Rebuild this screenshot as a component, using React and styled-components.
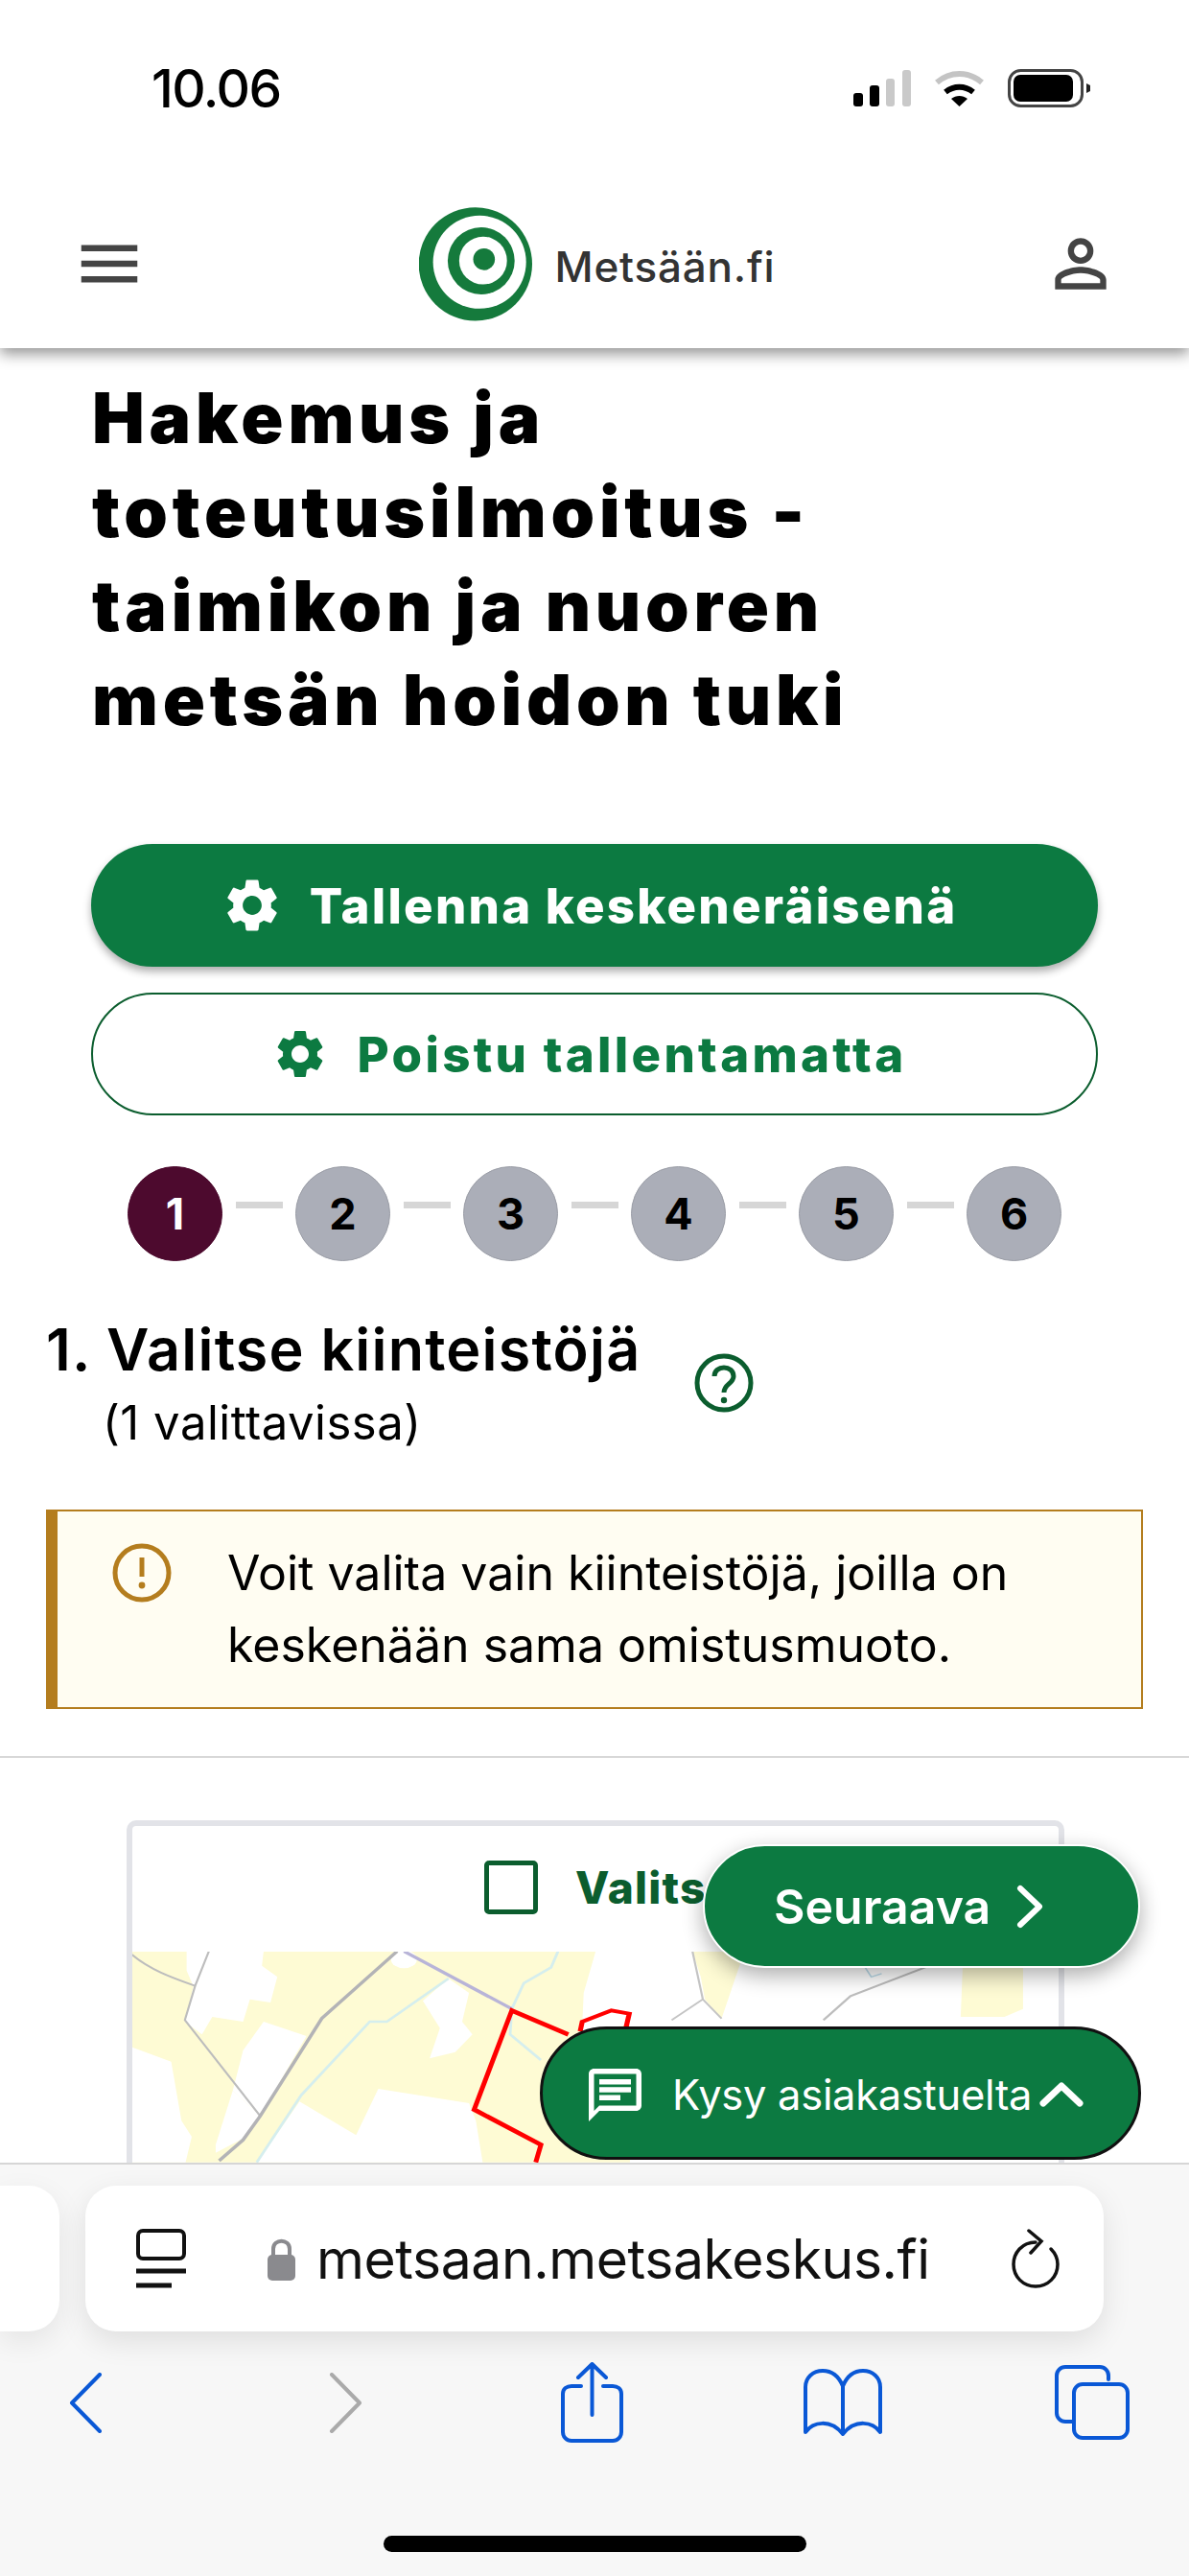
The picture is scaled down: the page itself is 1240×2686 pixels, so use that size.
import React from "react";
import styled, { createGlobalStyle } from "styled-components";
import { MdMenu, MdPersonOutline, MdSettings } from "react-icons/md";

const GREEN = "#0c7a41";
const DARK_GREEN = "#0b5d2e";
const BLUE = "#0a58d6";
const AMBER = "#b47d1e";

const GlobalStyle = createGlobalStyle`
	html, body {
		margin: 0;
		padding: 0;
		background: #fff;
	}
	body {
		font-family: Inter, "Liberation Sans", sans-serif;
		color: #000;
	}
`;

const Page = styled.div`
	position: relative;
	width: 1240px;
	height: 2686px;
	display: flex;
	flex-direction: column;
	overflow: hidden;
	background: #fff;
`;
const StatusBar = styled.div`
	height: 184px;
	display: flex;
	align-items: center;
	justify-content: space-between;
	padding: 0 103px 0 158px;
`;
const Time = styled.div`
	font-size: 55px;
	font-weight: 500;
	letter-spacing: -1.5px;
`;
const StatusIcons = styled.div`
	display: flex;
	align-items: center;
	gap: 25px;
`;
const Header = styled.header`
	position: relative;
	z-index: 2;
	height: 179px;
	padding: 3px 73px 0 75px;
	box-sizing: border-box;
	display: flex;
	align-items: center;
	justify-content: space-between;
	background: #fff;
	box-shadow: 0 6px 14px rgba(0, 0, 0, 0.42);
	clip-path: inset(0 0 -40px 0);
	color: #444;
`;
const Logo = styled.div`
	display: flex;
	align-items: center;
	gap: 24px;
	margin-left: 5px;
`;
const LogoText = styled.span`
	font-size: 44px;
	font-weight: 500;
	letter-spacing: 0.8px;
	color: #333;
	padding-top: 6px;
`;
const Main = styled.main`
	flex: 1;
	min-height: 0;
	overflow: hidden;
`;
const Title = styled.h1`
	margin: 24px 0 101px;
	padding-left: 96px;
	font-size: 73px;
	line-height: 98px;
	font-weight: 900;
	letter-spacing: 4.8px;
`;
const Actions = styled.div`
	display: flex;
	flex-direction: column;
	gap: 27px;
	padding: 0 95px;
`;
const ActionButton = styled.button`
	height: 128px;
	border-radius: 64px;
	display: flex;
	align-items: center;
	justify-content: center;
	gap: ${(p) => (p.$outlined ? 30 : 27)}px;
	padding: 0 12px 0 0;
	font-family: inherit;
	font-size: 51px;
	font-weight: 800;
	letter-spacing: ${(p) => (p.$outlined ? 3.3 : 2.2)}px;
	box-sizing: border-box;
	color: ${(p) => (p.$outlined ? GREEN : "#fff")};
	background: ${(p) => (p.$outlined ? "#fff" : GREEN)};
	border: ${(p) => (p.$outlined ? `2px solid ${DARK_GREEN}` : "none")};
	box-shadow: ${(p) => (p.$outlined ? "none" : "0 5px 9px rgba(0, 0, 0, 0.32)")};
`;
const Stepper = styled.div`
	display: flex;
	align-items: center;
	margin-top: 53px;
	padding-left: 133px;
`;
const StepCircle = styled.div`
	width: 99px;
	height: 99px;
	flex: none;
	box-sizing: border-box;
	border-radius: 50%;
	display: flex;
	align-items: center;
	justify-content: center;
	font-size: 45px;
	font-weight: 700;
	color: ${(p) => (p.$active ? "#fff" : "#000")};
	background: ${(p) => (p.$active ? "#4d0a2e" : "#abaeb8")};
	border: 1px solid ${(p) => (p.$active ? "#4d0a2e" : "#9a9da6")};
`;
const StepLine = styled.div`
	width: 49px;
	height: 7px;
	margin: 0 13px 18px 14px;
	background: #d6d6d6;
	flex: none;
`;
const SectionHead = styled.div`
	display: flex;
	align-items: center;
	margin-top: 57px;
	padding-left: 48px;
`;
const SectionText = styled.div`
	width: 676px;
`;
const SectionTitle = styled.h2`
	margin: 0;
	font-size: 61px;
	line-height: 70px;
	font-weight: 600;
	letter-spacing: 1.2px;
	white-space: nowrap;
`;
const SectionNote = styled.div`
	margin-top: 14px;
	padding-left: 59px;
	font-size: 49px;
	line-height: 56px;
	letter-spacing: 0.5px;
`;
const Alert = styled.div`
	margin: 62px 48px 0;
	height: 208px;
	box-sizing: border-box;
	display: flex;
	padding: 33px 40px 0 57px;
	gap: 58px;
	background: #fffdf2;
	border: 2px solid ${AMBER};
	border-left-width: 12px;
`;
const AlertText = styled.div`
	font-size: 50px;
	line-height: 75px;
	margin-top: -6px;
	white-space: nowrap;
`;
const Divider = styled.hr`
	margin: 49px 0 0;
	border: 0;
	height: 2px;
	background: #d8d8d8;
`;
const MapCard = styled.section`
	margin: 65px 130px 0 132px;
	border: 6px solid #e2e3e8;
	border-bottom: 0;
	border-radius: 10px 10px 0 0;
`;
const SelectRow = styled.div`
	height: 131px;
	display: flex;
	align-items: center;
	padding: 0 0 4px 367px;
	gap: 39px;
	box-sizing: border-box;
`;
const Checkbox = styled.div`
	width: 56px;
	height: 56px;
	box-sizing: border-box;
	border: 5px solid ${DARK_GREEN};
	border-radius: 5px;
`;
const SelectLabel = styled.span`
	font-size: 46px;
	font-weight: 800;
	color: ${DARK_GREEN};
	letter-spacing: 1.2px;
`;
const MapSvg = styled.svg`
	display: block;
`;
const FloatingNext = styled.button`
	position: absolute;
	left: 733px;
	top: 1923px;
	width: 456px;
	height: 129px;
	z-index: 3;
	border-radius: 65px;
	border: 2px solid #fff;
	box-sizing: border-box;
	background: ${GREEN};
	color: #fff;
	display: flex;
	align-items: center;
	gap: 27px;
	padding: 0 0 0 72px;
	font-family: inherit;
	font-size: 50px;
	font-weight: 600;
	box-shadow: 0 8px 22px rgba(0, 0, 0, 0.32);
`;
const FloatingSupport = styled.button`
	position: absolute;
	left: 563px;
	top: 2113px;
	width: 627px;
	height: 139px;
	z-index: 3;
	border-radius: 70px;
	border: 3px solid #111;
	box-sizing: border-box;
	background: ${GREEN};
	color: #fff;
	display: flex;
	align-items: center;
	padding: 3px 0 0 48px;
	font-family: inherit;
	font-size: 43.5px;
	font-weight: 400;
`;
const SupportLabel = styled.span`
	margin: 0 8px 0 32px;
	letter-spacing: -0.3px;
	white-space: nowrap;
`;
const BrowserChrome = styled.footer`
	position: relative;
	z-index: 4;
	height: 431px;
	box-sizing: border-box;
	border-top: 2px solid #d6d6d6;
	background: #f7f7f7;
	padding-top: 22px;
`;
const AddressRow = styled.div`
	display: flex;
	gap: 27px;
`;
const TabStub = styled.div`
	width: 62px;
	height: 152px;
	background: #fff;
	border-radius: 0 32px 32px 0;
	box-shadow: 0 10px 30px rgba(0, 0, 0, 0.08);
`;
const AddressPill = styled.div`
	width: 1062px;
	height: 152px;
	background: #fff;
	border-radius: 32px;
	box-shadow: 0 10px 30px rgba(0, 0, 0, 0.1);
	display: flex;
	align-items: center;
	padding: 0 46px 0 53px;
	box-sizing: border-box;
`;
const UrlText = styled.span`
	margin-left: 21px;
	font-size: 57px;
	letter-spacing: -0.4px;
	color: #111;
	flex: 1;
	white-space: nowrap;
`;
const LockWrap = styled.span`
	margin-left: 84px;
	display: flex;
`;
const NavRow = styled.nav`
	display: flex;
	align-items: center;
	height: 84px;
	margin-top: 32px;
	padding-left: 72px;
`;
const NavIcon = styled.svg`
	flex: none;
	margin-left: ${(p) => p.$gap || 0}px;
	fill: none;
	stroke: ${(p) => (p.$muted ? "#aaa" : BLUE)};
	stroke-width: ${(p) => p.$weight || 4};
	stroke-linecap: round;
	stroke-linejoin: round;
`;
const HomeBar = styled.div`
	width: 441px;
	height: 17px;
	margin: 97px auto 0;
	border-radius: 9px;
	background: #000;
`;

const SignalIcon = () => (
	<svg width="60" height="38" viewBox="0 0 60 38">
		<rect x="0" y="24" width="10" height="14" rx="3" fill="#000" />
		<rect x="17" y="16" width="10" height="22" rx="3" fill="#000" />
		<rect x="34" y="9" width="9" height="29" rx="3" fill="#c9c9c9" />
		<rect x="51" y="0" width="9" height="38" rx="3" fill="#c9c9c9" />
	</svg>
);

const WifiIcon = () => (
	<svg width="51" height="38" viewBox="0 0 51 38" fill="none">
		<path d="M2 13 C16 1 35 1 49 13" stroke="#c4c4c4" strokeWidth="6" />
		<path d="M11 23 C20 16 31 16 40 23" stroke="#000" strokeWidth="6" />
		<path d="M17 30 L25.5 38 L34 30 C29 26 22 26 17 30 Z" fill="#000" />
	</svg>
);

const BatteryIcon = () => (
	<svg width="86" height="40" viewBox="0 0 86 40">
		<rect x="1.5" y="1.5" width="76" height="37" rx="12" fill="none" stroke="#444" strokeWidth="3" />
		<rect x="6" y="6" width="62" height="28" rx="7" fill="#000" />
		<path d="M82 15 L86 17 V23 L82 25 Z" fill="#222" />
	</svg>
);

const LogoMark = () => (
	<svg width="118" height="119" viewBox="110 75 355 357">
		<circle cx="287" cy="253" r="178" fill="#157a3c" />
		<circle cx="300" cy="247" r="146" fill="#fff" />
		<circle cx="305" cy="243" r="105" fill="#157a3c" />
		<circle cx="311" cy="242" r="75" fill="#fff" />
		<circle cx="314" cy="238" r="34" fill="#157a3c" />
	</svg>
);

const HelpIcon = () => (
	<svg width="62" height="62" viewBox="0 0 62 62" fill="none">
		<circle cx="31" cy="31" r="28" stroke={DARK_GREEN} strokeWidth="5" />
		<path d="M21 24 C21 12 41 12 41 24 C41 32 31 32 31 41" stroke={DARK_GREEN} strokeWidth="5" />
		<circle cx="31" cy="49" r="3.2" fill={DARK_GREEN} />
	</svg>
);

const WarningIcon = () => (
	<svg width="62" height="62" viewBox="0 0 62 62" fill="none" style={{ flex: "none" }}>
		<circle cx="31" cy="31" r="28" stroke={AMBER} strokeWidth="5" />
		<path d="M31 15 V35" stroke={AMBER} strokeWidth="5" />
		<circle cx="31" cy="44" r="3.4" fill={AMBER} />
	</svg>
);

const ChatIcon = () => (
	<svg width="55" height="55" viewBox="2 2 20 20" fill="#fff" style={{ flex: "none" }}>
		<path d="M20 2H4c-1.1 0-2 .9-2 2v18l4-4h14c1.1 0 2-.9 2-2V4c0-1.1-.9-2-2-2zm0 14H6l-2 2V4h16v12z" />
		<path d="M6 12h8v2H6zM6 9h12v2H6zM6 6h12v2H6z" />
	</svg>
);

// traced from the reference, group transforms take the crop coordinates to page pixels
const MapDrawing = () => (
	<MapSvg width="966" height="240" viewBox="138 2037 966 240" fill="none">
		<g transform="translate(100 1880) scale(0.357 0.3333)">
			<path fill="#fefbd4" d="M105 470H1460L1425 600L1420 720L1560 700V1130H105Z" />
			<g fill="#fff">
				<path d="M265 470H490L485 515L530 550L510 630L450 620L430 690L340 675L310 730L260 690L285 580L265 530Z" />
				<path d="M105 770L220 815L250 1000L280 1050L262 1130H105Z" />
				<path d="M490 690L615 735L480 985L400 905L430 780Z" />
				<path d="M400 905L480 985L440 1050L350 1100L350 1075Z" />
				<path d="M1030 555L1090 600L1070 690L1100 730L1050 785L975 805L1005 710L955 625Z" />
				<path d="M825 900L1090 945L1110 1000L1130 1130H470L595 940L760 1045Z" />
				<ellipse cx="900" cy="495" rx="38" ry="28" />
			</g>
			<g>
				<path d="M1030 555L850 690H800L600 920L470 1130" stroke="#d5eeee" strokeWidth="8" />
				<path d="M1350 470L1330 520L1250 570L1215 650L1210 730L1300 810" stroke="#d5eeee" strokeWidth="8" />
				<path d="M105 480C160 530 230 555 290 578M330 470L290 578L260 685L480 985" stroke="#bdbdbd" strokeWidth="6" />
				<path d="M880 470L660 680L480 985L430 1060L360 1125" stroke="#b3b3b6" strokeWidth="10" />
				<path d="M900 470L1215 650" stroke="#b8b4d8" strokeWidth="10" />
				<path d="M1380 730L1215 655L1105 965L1300 1075L1285 1130" stroke="#ff0000" strokeWidth="14" />
			</g>
		</g>
		<g transform="translate(540 1890) scale(0.4337 0.3333)">
			<path fill="#fefbd4" d="M420 440H545L490 650L450 590L440 520Z" />
			<path fill="#fefbd4" d="M1070 480H1215V620L1170 645H1065Z" />
			<path d="M420 440L445 590L490 650M445 590L370 655" stroke="#c4c4c4" strokeWidth="5" />
			<path d="M990 485L870 545L800 580L735 655" stroke="#bdbdbd" strokeWidth="6" />
			<path d="M835 490L850 520L875 510" stroke="#bcdcea" strokeWidth="4" />
			<path d="M150 690L155 660L225 625L268 635L260 680" stroke="#ff0000" strokeWidth="12" />
		</g>
	</MapSvg>
);

const steps = [1, 2, 3, 4, 5, 6];

export default function App() {
	return (
		<Page>
			<GlobalStyle />
			<StatusBar>
				<Time>10.06</Time>
				<StatusIcons>
					<SignalIcon />
					<WifiIcon />
					<BatteryIcon />
				</StatusIcons>
			</StatusBar>
			<Header>
				<MdMenu size={78} />
				<Logo>
					<LogoMark />
					<LogoText>Metsään.fi</LogoText>
				</Logo>
				<MdPersonOutline size={80} />
			</Header>
			<Main>
				<Title>
					Hakemus ja
					<br />
					toteutusilmoitus -
					<br />
					taimikon ja nuoren
					<br />
					metsän hoidon tuki
				</Title>
				<Actions>
					<ActionButton>
						<MdSettings size={66} />
						Tallenna keskeneräisenä
					</ActionButton>
					<ActionButton $outlined>
						<MdSettings size={60} />
						Poistu tallentamatta
					</ActionButton>
				</Actions>
				<Stepper>
					{steps.map((n) => (
						<React.Fragment key={n}>
							<StepCircle $active={n === 1}>{n}</StepCircle>
							{n < steps.length && <StepLine />}
						</React.Fragment>
					))}
				</Stepper>
				<SectionHead>
					<SectionText>
						<SectionTitle>1. Valitse kiinteistöjä</SectionTitle>
						<SectionNote>(1 valittavissa)</SectionNote>
					</SectionText>
					<HelpIcon />
				</SectionHead>
				<Alert>
					<WarningIcon />
					<AlertText>
						Voit valita vain kiinteistöjä, joilla on
						<br />
						keskenään sama omistusmuoto.
					</AlertText>
				</Alert>
				<Divider />
				<MapCard>
					<SelectRow>
						<Checkbox />
						<SelectLabel>Valitse kaikki</SelectLabel>
					</SelectRow>
					<MapDrawing />
				</MapCard>
			</Main>
			<FloatingNext>
				Seuraava
				<svg width="28" height="46" viewBox="0 0 28 46" fill="none">
					<path d="M4 4L24 23L4 42" stroke="#fff" strokeWidth="6" strokeLinecap="round" strokeLinejoin="round" />
				</svg>
			</FloatingNext>
			<FloatingSupport>
				<ChatIcon />
				<SupportLabel>Kysy asiakastuelta</SupportLabel>
				<svg width="46" height="26" viewBox="0 0 46 26" fill="none">
					<path d="M4 22L23 4L42 22" stroke="#fff" strokeWidth="7" strokeLinecap="round" strokeLinejoin="round" />
				</svg>
			</FloatingSupport>
			<BrowserChrome>
				<AddressRow>
					<TabStub />
					<AddressPill>
						<svg width="52" height="62" viewBox="0 0 52 62" fill="none" stroke="#111" strokeWidth="4">
							<rect x="2" y="2" width="48" height="29" rx="5" />
							<path d="M0 44H52" strokeWidth="5" />
							<path d="M0 59H37" strokeWidth="5" />
						</svg>
						<LockWrap>
							<svg width="31" height="45" viewBox="0 0 31 45" fill="none">
								<path d="M7 20V12C7 1 24 1 24 12V20" stroke="#8a8a8e" strokeWidth="4" />
								<rect x="1" y="18" width="29" height="27" rx="5" fill="#8a8a8e" />
							</svg>
						</LockWrap>
						<UrlText>metsaan.metsakeskus.fi</UrlText>
						<svg width="50" height="62" viewBox="0 0 50 62" fill="none" stroke="#111" strokeWidth="3.5" strokeLinecap="round">
							<path d="M25 14C11 14 2 25 2 37C2 50 12 60 25 60C38 60 48 50 48 37C48 30 45 25 41 21" />
							<path d="M18 2L31 13L20 25" />
						</svg>
					</AddressPill>
				</AddressRow>
				<NavRow>
					<NavIcon width="34" height="63" viewBox="0 0 34 63">
						<path d="M32 2L3 31.5L32 61" />
					</NavIcon>
					<NavIcon $gap={237} $muted width="35" height="63" viewBox="0 0 35 63">
						<path d="M3 2L32 31.5L3 61" />
					</NavIcon>
					<NavIcon $gap={207} width="65" height="84" viewBox="0 0 65 84">
						<path d="M21 25H11C6 25 2 28 2 33V73C2 78 6 82 11 82H54C59 82 63 78 63 73V33C63 28 59 25 54 25H44" />
						<path d="M32.5 2V55M18 16L32.5 2L47 16" />
					</NavIcon>
					<NavIcon $gap={188} width="82" height="70" viewBox="0 0 82 70">
						<path d="M41 18C36 6 28 2 20 2C10 2 2 9 2 19V66C10 55 28 52 41 68C54 52 72 55 80 66V19C80 9 72 2 62 2C54 2 46 6 41 18V68" />
					</NavIcon>
					<NavIcon $gap={180} width="78" height="78" viewBox="0 0 78 78">
						<path d="M56 15V11C56 6 52 2 47 2H11C6 2 2 6 2 11V50C2 55 6 59 11 59H18" />
						<rect x="20" y="20" width="56" height="56" rx="9" />
					</NavIcon>
				</NavRow>
				<HomeBar />
			</BrowserChrome>
		</Page>
	);
}
